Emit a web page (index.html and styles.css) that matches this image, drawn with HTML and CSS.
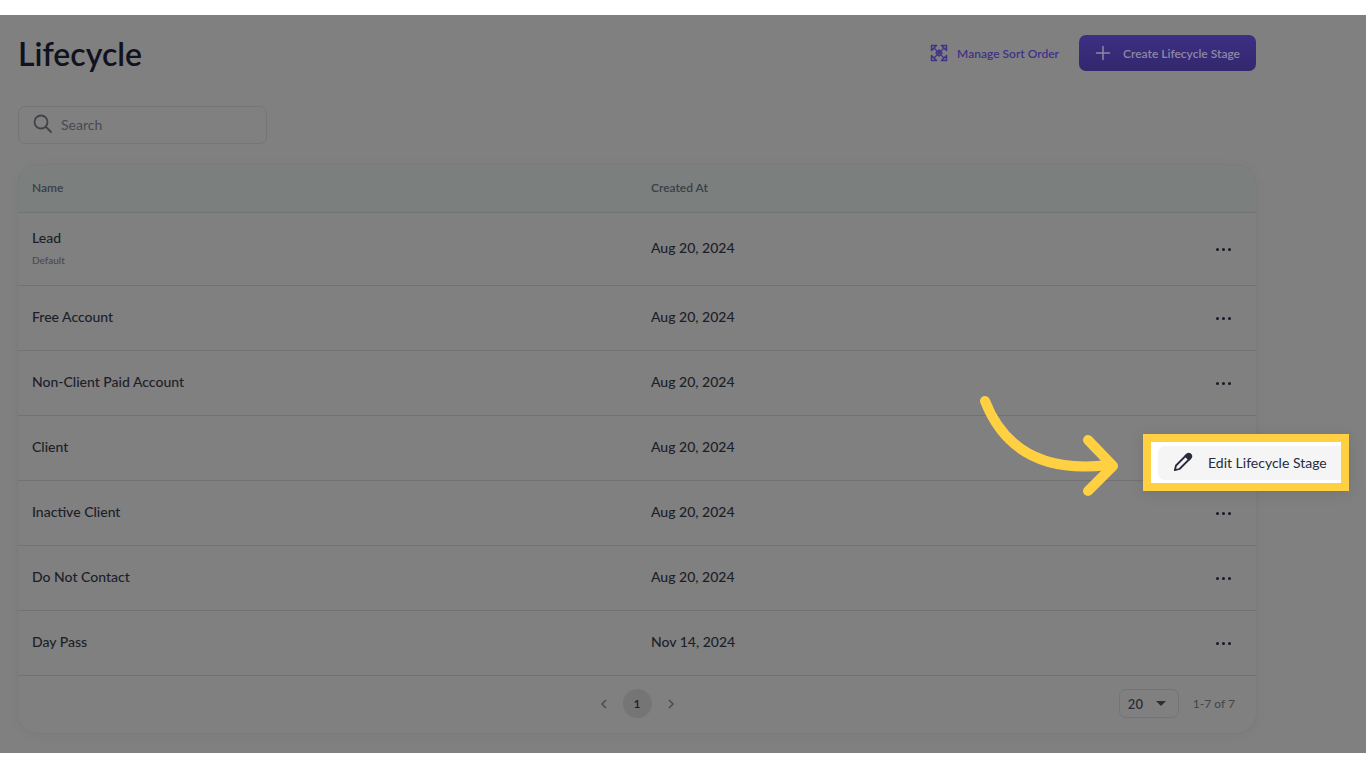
FILE: index.html
```html
<!DOCTYPE html>
<html lang="en">

<head>
    <meta charset="UTF-8">
    <meta name="viewport" content="width=device-width, initial-scale=1.0">
    <title>Lifecycle</title>
    <link rel="stylesheet" href="styles.css">
</head>

<body>
    <main class="screen">
        <header class="page-header">
            <h1>Lifecycle</h1>
            <div class="actions">
                <button type="button" class="btn-link">
                    <svg width="18" height="18" viewBox="0 0 18 18" fill="none" stroke="currentColor" stroke-width="1.5" stroke-linejoin="round">
                        <path d="M1.500 6.500v-5h5zM11.500 1.500h5v5zM16.500 11.500v5h-5zM6.500 16.500h-5v-5z" />
                        <path d="M4 4l10 10M14 4L4 14" stroke-width="1.2" />
                        <path d="M9 6l3 3-3 3-3-3z" />
                    </svg>
                    Manage Sort Order
                </button>
                <button type="button" class="btn-primary">
                    <svg width="16" height="16" viewBox="0 0 16 16" fill="none" stroke="currentColor" stroke-width="1.5" stroke-linecap="round">
                        <path d="M8 1.500v13M1.500 8h13" />
                    </svg>
                    Create Lifecycle Stage
                </button>
            </div>
        </header>

        <label class="search">
            <svg width="20" height="20" viewBox="0 0 20 20" fill="none" stroke="currentColor" stroke-width="1.8" stroke-linecap="round">
                <circle cx="8" cy="8" r="6.500" />
                <path d="M13 13l5 5" />
            </svg>
            <input type="text" placeholder="Search" aria-label="Search">
        </label>

        <section class="card">
            <table class="stages">
                <thead>
                    <tr>
                        <th class="col-name">Name</th>
                        <th>Created At</th>
                        <th class="col-menu"></th>
                    </tr>
                </thead>
                <tbody>
                    <tr class="tall">
                        <td>Lead<small>Default</small></td>
                        <td>Aug 20, 2024</td>
                        <td class="col-menu"><button type="button" class="dots" aria-label="Options"><i></i><i></i><i></i></button></td>
                    </tr>
                    <tr>
                        <td>Free Account</td>
                        <td>Aug 20, 2024</td>
                        <td class="col-menu"><button type="button" class="dots" aria-label="Options"><i></i><i></i><i></i></button></td>
                    </tr>
                    <tr>
                        <td>Non-Client Paid Account</td>
                        <td>Aug 20, 2024</td>
                        <td class="col-menu"><button type="button" class="dots" aria-label="Options"><i></i><i></i><i></i></button></td>
                    </tr>
                    <tr>
                        <td>Client</td>
                        <td>Aug 20, 2024</td>
                        <td class="col-menu"></td>
                    </tr>
                    <tr>
                        <td>Inactive Client</td>
                        <td>Aug 20, 2024</td>
                        <td class="col-menu"><button type="button" class="dots" aria-label="Options"><i></i><i></i><i></i></button></td>
                    </tr>
                    <tr>
                        <td>Do Not Contact</td>
                        <td>Aug 20, 2024</td>
                        <td class="col-menu"><button type="button" class="dots" aria-label="Options"><i></i><i></i><i></i></button></td>
                    </tr>
                    <tr>
                        <td>Day Pass</td>
                        <td>Nov 14, 2024</td>
                        <td class="col-menu"><button type="button" class="dots" aria-label="Options"><i></i><i></i><i></i></button></td>
                    </tr>
                </tbody>
            </table>

            <footer class="card-footer">
                <nav class="pager" aria-label="Pages">
                    <button type="button" class="pager-arrow" aria-label="Previous page">
                        <svg width="10" height="10" viewBox="0 0 10 10" fill="none" stroke="currentColor" stroke-width="1.5"><path d="M7 1L3 5l4 4" /></svg>
                    </button>
                    <button type="button" class="pager-page">1</button>
                    <button type="button" class="pager-arrow" aria-label="Next page">
                        <svg width="10" height="10" viewBox="0 0 10 10" fill="none" stroke="currentColor" stroke-width="1.5"><path d="M3 1l4 4-4 4" /></svg>
                    </button>
                </nav>
                <div class="page-size">
                    <span class="select-box">
                        <select aria-label="Rows per page">
                            <option>20</option>
                            <option>50</option>
                        </select>
                        <svg width="10" height="5" viewBox="0 0 10 5" fill="currentColor"><path d="M0 0h10L5 5z" /></svg>
                    </span>
                    <span class="range">1-7 of 7</span>
                </div>
            </footer>
        </section>

        <!-- callout over the open row menu -->
        <svg class="arrow" width="142" height="104" viewBox="0 0 142 104" fill="none" stroke="#ffd142" stroke-width="10" stroke-linecap="round" stroke-linejoin="round">
            <path d="M8 8C26 54 64 80 131 72" />
            <path d="M111 47l25 26-25 25" />
        </svg>
        <div class="callout">
            <button type="button" class="menu-item">
                <svg width="20" height="20" viewBox="0 0 20 20" fill="none" stroke="currentColor" stroke-width="1.8" stroke-linejoin="round">
                    <path d="M1.800 18.200l1.200-4.700L13.500 3l3.500 3.500L6.500 17z" />
                    <path d="M12.500 4l2-2q1.500-1 3 .5t.5 3l-2 2z" fill="currentColor" />
                </svg>
                Edit Lifecycle Stage
            </button>
        </div>
    </main>
</body>

</html>
```
FILE: styles.css
```css
* {
    box-sizing: border-box;
}

body {
    margin: 0;
    padding: 15px 0;
    background-color: #ffffff;
    font-family: Lato, "Liberation Sans", sans-serif;
    font-size: 14px;
    color: #1c1e28;
}

button,
input,
select {
    font: inherit;
    color: inherit;
    background: none;
    border: none;
    padding: 0;
    margin: 0;
}

button {
    cursor: pointer;
}

.screen {
    position: relative;
    background-color: #808080;
    padding: 20px 110px 20px 18px;
}

.page-header {
    display: flex;
    justify-content: space-between;
    align-items: center;
    height: 36px;
}

h1 {
    margin: 0;
    font-size: 32px;
    font-weight: 600;
    color: #10121e;
}

.actions {
    display: flex;
    align-items: center;
    gap: 20px;
    font-size: 12px;
    font-weight: 600;
}

.btn-link {
    display: flex;
    align-items: center;
    gap: 9px;
    color: #40318a;
}

.btn-primary {
    display: flex;
    align-items: center;
    gap: 12px;
    height: 36px;
    padding: 0 16px;
    border-radius: 7px;
    background: linear-gradient(#3d2f84, #33276d);
    color: #8d88a5;
}

.search {
    display: flex;
    align-items: center;
    gap: 8px;
    width: 249px;
    height: 38px;
    margin-top: 35px;
    padding: 0 14px 2px;
    border: 1px solid #757575;
    border-radius: 7px;
    color: #40424b;
}

.search input {
    flex: 1;
    min-width: 0;
    outline: none;
}

.search input::placeholder {
    color: #454954;
    opacity: 1;
}

.card {
    margin-top: 21px;
    border-radius: 20px;
    box-shadow: 0 0 0 1px #7b7b7b, 0 2px 14px rgba(0, 0, 0, 0.04);
}

.stages {
    width: 100%;
    border-collapse: separate;
    border-spacing: 0;
    table-layout: fixed;
}

.stages th {
    height: 48px;
    padding: 0 14px 2px;
    background-color: #7b7f7d;
    border-bottom: 1px solid #737575;
    color: #3c3e49;
    font-size: 12px;
    font-weight: 600;
    text-align: left;
}

.stages th:first-child {
    border-top-left-radius: 20px;
}

.stages th:last-child {
    border-top-right-radius: 20px;
}

.stages td {
    height: 65px;
    padding: 0 14px 3px;
    border-bottom: 1px solid #727272;
    font-weight: 500;
}

.stages .tall td {
    height: 73px;
}

.stages small {
    display: block;
    margin-top: 8px;
    font-size: 10px;
    color: #484a53;
}

.stages .col-name {
    width: 50%;
}

.stages .col-menu {
    width: 80px;
    padding-right: 25px;
    text-align: right;
}

.dots {
    display: inline-flex;
    gap: 3px;
    vertical-align: middle;
}

.dots i {
    width: 3px;
    height: 3px;
    border-radius: 50%;
    background-color: #171926;
}

.card-footer {
    display: grid;
    grid-template-columns: 1fr auto 1fr;
    align-items: center;
    height: 57px;
    padding: 0 21px 2px;
}

.pager {
    grid-column: 2;
    display: flex;
    align-items: center;
    gap: 14px;
}

.pager-arrow {
    display: flex;
    color: #4c4c50;
}

.pager-page {
    width: 29px;
    height: 29px;
    border-radius: 50%;
    background-color: #757575;
    font-size: 12px;
    font-weight: 600;
}

.page-size {
    display: flex;
    justify-content: flex-end;
    align-items: center;
    gap: 14px;
}

.select-box {
    position: relative;
    color: #2c2e38;
}

.select-box select {
    appearance: none;
    width: 60px;
    height: 29px;
    padding-left: 8px;
    border: 1px solid #747474;
    border-radius: 7px;
    font-size: 13px;
    font-weight: 600;
}

.select-box svg {
    position: absolute;
    right: 13px;
    top: 12px;
    pointer-events: none;
}

.range {
    font-size: 12px;
    color: #42444e;
}

.arrow {
    position: absolute;
    top: 378px;
    right: 247px;
}

.callout {
    position: absolute;
    top: 419px;
    right: 17px;
    width: 206px;
    padding: 4px 0 3px 7px;
    border: 8px solid #ffd142;
    background-color: #ffffff;
    box-shadow: 0 2px 14px rgba(0, 0, 0, 0.1);
}

.menu-item {
    display: flex;
    align-items: center;
    gap: 15px;
    width: 100%;
    height: 34px;
    padding: 0 0 2px 15px;
    border-radius: 7px 0 0 7px;
    background-color: #f5f5f5;
    color: #282b3b;
    white-space: nowrap;
}
```
